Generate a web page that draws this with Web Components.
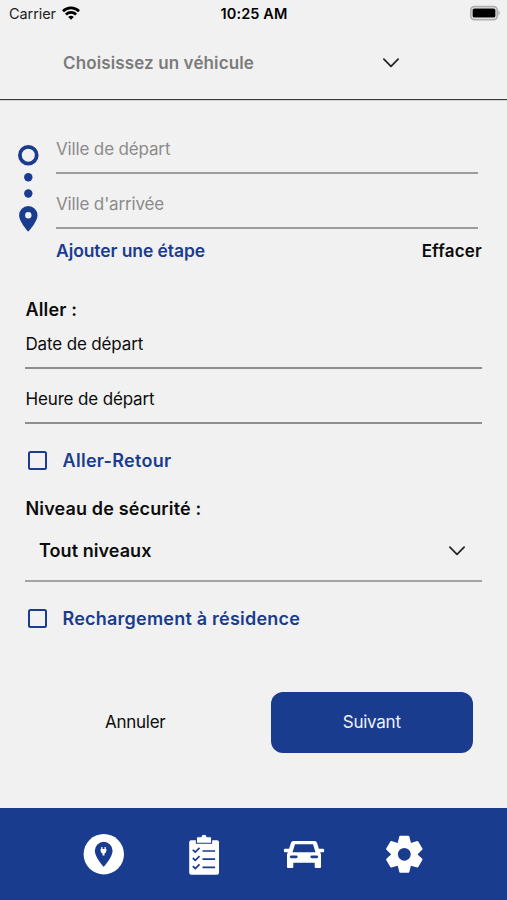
<!DOCTYPE html>
<html lang="fr">
<head>
<meta charset="utf-8">
<title>Itinéraire</title>
<style>
  body {
    margin: 0;
    width: 507px;
    height: 900px;
    overflow: hidden;
    background: #f1f1f1;
    color: #0c0c0c;
    font-family: Inter, 'Liberation Sans', sans-serif;
    font-size: 17px;
    letter-spacing: -0.15px;
    --blue: #193c8f;
    --line: #9c9c9c;
  }
</style>
</head>
<body>
<trip-app></trip-app>

<script>
/**
 * @class StatusBar
 * @description Carrier, clock and battery at the top of the screen.
 */
class StatusBar extends HTMLElement {
  constructor() {
    super();
    this.attachShadow({ mode: 'open' });
    this.shadowRoot.innerHTML = `
      <style>
        :host {
          display: grid;
          grid-template-columns: 1fr auto 1fr;
          align-items: center;
          height: 28px;
          padding: 0 8px 0 9px;
          font-size: 14.5px;
          line-height: 28px;
        }
        .carrier { display: flex; align-items: center; gap: 6px; letter-spacing: -0.08px; color: #222; }
        .carrier svg { margin-top: -2px; }
        .clock { font-weight: 600; letter-spacing: 0.1px; color: #000; }
        .battery { justify-self: end; margin: -2px -2px 0 0; }
        svg { display: block; }
      </style>
      <div class="carrier">
        <span>Carrier</span>
        <svg width="18" height="14" viewBox="0 0 18 14" fill="none" stroke="#000" stroke-width="2.7">
          <path d="M1 5.2a11.4 11.4 0 0 1 16 0"/>
          <path d="M3.9 8.5a7.3 7.3 0 0 1 10.2 0"/>
          <path d="M9 13.8 6.2 11a4 4 0 0 1 5.6 0z" fill="#000" stroke="none"/>
        </svg>
      </div>
      <span class="clock"><slot></slot></span>
      <svg class="battery" width="31" height="16" viewBox="0 0 31 16">
        <rect x=".8" y="1.6" width="26.4" height="13" rx="3.6" fill="#f1f1f1" stroke="#b0b0b0" stroke-width="1.8"/>
        <rect x="2.6" y="3.4" width="22.8" height="9.2" rx="1.6" fill="#000"/>
        <path d="M28.4 5.6c1.9.7 1.9 4.3 0 5z" fill="#b0b0b0"/>
      </svg>
    `;
  }
}
customElements.define('status-bar', StatusBar);

/**
 * @class ChevronIcon
 * @description Thin downward arrow used by both pickers.
 */
class ChevronIcon extends HTMLElement {
  constructor() {
    super();
    this.attachShadow({ mode: 'open' });
    this.shadowRoot.innerHTML = `
      <style>
        :host { display: block; width: 16px; height: 10px; }
        svg { display: block; }
      </style>
      <svg width="16" height="10" viewBox="0 0 16 10" fill="none" stroke="#222" stroke-width="1.7" stroke-linecap="round" stroke-linejoin="round">
        <path d="M.9 1.2 8 8.4l7.1-7.2"/>
      </svg>
    `;
  }
}
customElements.define('chevron-icon', ChevronIcon);

/**
 * @class VehiclePicker
 * @description Header with the vehicle drop-down.
 */
class VehiclePicker extends HTMLElement {
  constructor() {
    super();
    this.attachShadow({ mode: 'open' });
    this.shadowRoot.innerHTML = `
      <style>
        :host {
          display: flex;
          justify-content: space-between;
          align-items: center;
          box-sizing: border-box;
          height: 72px;
          padding: 0 108px 2px 63px;
          border-bottom: 1px solid #3a3a3a;
          box-shadow: 0 1px 0 #d4d4d4;
          color: #7b7b7b;
          font-weight: 600;
          letter-spacing: 0.12px;
        }
      </style>
      <slot></slot>
      <chevron-icon></chevron-icon>
    `;
  }
}
customElements.define('vehicle-picker', VehiclePicker);

/**
 * @class LineField
 * @description One underlined row. Takes a label and, optionally, an icon in the "end" slot.
 */
class LineField extends HTMLElement {
  constructor() {
    super();
    this.attachShadow({ mode: 'open' });
    this.shadowRoot.innerHTML = `
      <style>
        :host {
          display: flex;
          justify-content: space-between;
          align-items: center;
          box-sizing: border-box;
          height: 55px;
          padding-top: 7px;
          border-bottom: 2px solid var(--line);
        }
        :host([placeholder]) { color: #8b8b8b; }
        :host([select]) {
          height: 62px;
          padding: 1px 17px 0 14px;
          font-size: 18px;
          font-weight: 600;
          letter-spacing: 0.06px;
        }
      </style>
      <slot></slot>
      <slot name="end"></slot>
    `;
  }
}
customElements.define('line-field', LineField);

/**
 * @class RouteForm
 * @description Start and end cities with the route marker on the left.
 */
class RouteForm extends HTMLElement {
  constructor() {
    super();
    this.attachShadow({ mode: 'open' });
    this.shadowRoot.innerHTML = `
      <style>
        :host { display: flex; padding: 19px 29px 0 18px; }
        .marker { flex: none; width: 38px; padding-top: 25px; }
        .marker svg { display: block; }
        .fields { flex: 1; }
        .links {
          display: flex;
          justify-content: space-between;
          align-items: baseline;
          height: 33px;
          padding-top: 11px;
          line-height: 22px;
          margin-right: -4px;
          font-weight: 600;
        }
        .add { color: var(--blue); font-size: 17.5px; letter-spacing: -0.09px; }
        .clear { letter-spacing: 0.2px; }
      </style>
      <div class="marker">
        <svg width="21" height="90" viewBox="0 0 21 90" fill="#193c8f">
          <circle cx="10.3" cy="11.2" r="8.4" fill="none" stroke="#193c8f" stroke-width="3.8"/>
          <circle cx="10.3" cy="33.3" r="4.2"/>
          <circle cx="10.3" cy="49.5" r="4.2"/>
          <path fill-rule="evenodd" d="M10.3 62a9.2 9.2 0 0 0-9.2 9.2c0 6.6 9.2 16.4 9.2 16.4s9.2-9.8 9.2-16.4A9.2 9.2 0 0 0 10.3 62zm0 6a3.2 3.2 0 1 1 0 6.4 3.2 3.2 0 0 1 0-6.4z"/>
        </svg>
      </div>
      <div class="fields">
        <line-field placeholder>Ville de départ</line-field>
        <line-field placeholder>Ville d'arrivée</line-field>
        <div class="links">
          <span class="add">Ajouter une étape</span>
          <span class="clear">Effacer</span>
        </div>
      </div>
    `;
  }
}
customElements.define('route-form', RouteForm);

/**
 * @class CheckOption
 * @description Empty checkbox followed by a blue label.
 */
class CheckOption extends HTMLElement {
  constructor() {
    super();
    this.attachShadow({ mode: 'open' });
    this.shadowRoot.innerHTML = `
      <style>
        :host {
          display: flex;
          align-items: center;
          gap: 15.5px;
          height: 73px;
          padding-left: 3px;
          color: var(--blue);
          font-size: 18px;
          font-weight: 600;
          letter-spacing: 0.22px;
        }
        i {
          box-sizing: border-box;
          width: 19px;
          height: 19px;
          border: 2px solid var(--blue);
          border-radius: 2.5px;
        }
      </style>
      <i></i><slot></slot>
    `;
  }
}
customElements.define('check-option', CheckOption);

/**
 * @class TripOptions
 * @description Departure date and time, return trip and safety level.
 */
class TripOptions extends HTMLElement {
  constructor() {
    super();
    this.attachShadow({ mode: 'open' });
    this.shadowRoot.innerHTML = `
      <style>
        :host { display: block; padding: 0 25px; }
        h2 {
          margin: 0;
          padding-left: 0.5px;
          font-size: 18px;
          font-weight: 600;
          line-height: 22px;
          letter-spacing: 0.15px;
        }
        .go { padding-top: 26px; margin-bottom: -7px; }
        .level { padding-top: 1px; }
        line-field { --line: #8f8f8f; }
        line-field:not([select]) { text-indent: 0.5px; }
        line-field[select] { --line: #a3a3a3; }
      </style>
      <h2 class="go">Aller :</h2>
      <line-field>Date de départ</line-field>
      <line-field>Heure de départ</line-field>
      <check-option style="letter-spacing: 0.29px">Aller-Retour</check-option>
      <h2 class="level">Niveau de sécurité :</h2>
      <line-field select>Tout niveaux<chevron-icon slot="end"></chevron-icon></line-field>
      <check-option>Rechargement à résidence</check-option>
    `;
  }
}
customElements.define('trip-options', TripOptions);

/**
 * @class FormActions
 * @description Cancel and next buttons.
 */
class FormActions extends HTMLElement {
  constructor() {
    super();
    this.attachShadow({ mode: 'open' });
    this.shadowRoot.innerHTML = `
      <style>
        :host { display: flex; padding: 36.5px 34px 0 0; letter-spacing: -0.25px; }
        button {
          height: 61px;
          padding: 0;
          border: 0;
          border-radius: 12px;
          background: none;
          color: inherit;
          font: inherit;
          letter-spacing: inherit;
        }
        .cancel { flex: 1; }
        .next { width: 202.5px; background: var(--blue); color: #f1f3fa; }
      </style>
      <button class="cancel">Annuler</button>
      <button class="next">Suivant</button>
    `;
  }
}
customElements.define('form-actions', FormActions);

/**
 * @class TabBar
 * @description Bottom navigation: map, bookings, vehicles, settings.
 */
class TabBar extends HTMLElement {
  constructor() {
    super();
    this.attachShadow({ mode: 'open' });
    // The gear is a disc with the same tooth turned six times
    const teeth = [0, 60, 120, 180, 240, 300]
      .map(a => `<path d="M-6.8-10.5-5-17.8q.2-.7.9-.7h8.2q.7 0 .9.7L6.8-10.5z" transform="rotate(${a})"/>`)
      .join('');
    this.shadowRoot.innerHTML = `
      <style>
        :host {
          display: flex;
          justify-content: space-between;
          box-sizing: border-box;
          height: 92px;
          padding: 25px 82px 0 83px;
          background: var(--blue);
        }
        svg { display: block; }
      </style>
      <svg width="42" height="42" viewBox="0 0 42 42">
        <circle cx="20.8" cy="21.2" r="20.2" fill="#fff"/>
        <path d="M20.7 8.8a8.9 8.9 0 0 0-8.9 8.9c0 6.5 8.9 16.1 8.9 16.1s8.9-9.6 8.9-16.1a8.9 8.9 0 0 0-8.9-8.9z" fill="#193c8f"/>
        <path d="M17.6 16h5.8v2a2.9 2.9 0 0 1-1.9 2.6v2h-2v-2a2.9 2.9 0 0 1-1.9-2.6zM18.2 13.9h1.3v2.6h-1.3zM21.5 13.9h1.3v2.6h-1.3z" fill="#fff"/>
      </svg>
      <svg width="42" height="42" viewBox="0 0 42 42">
        <path d="M8.2 7.3h25.8a2 2 0 0 1 2 2v30.4a2 2 0 0 1-2 2H8.2a2 2 0 0 1-2-2V9.3a2 2 0 0 1 2-2z" fill="#fff"/>
        <path d="M14.4 3.800h3.500c.3-1.6 1.5-2.6 3.1-2.6s2.800 1 3.100 2.600h3.500a1 1 0 0 1 1 1v5.400H13.400V4.800a1 1 0 0 1 1-1z" fill="#fff" stroke="#193c8f" stroke-width="1.1"/>
        <path d="m9.8 16.800 2.500 2.300 4.200-4.200M9.8 25l2.500 2.300 4.200-4.200M9.8 33.200l2.500 2.300 4.200-4.200M19.500 18h12.600M19.500 26.200h12.600M19.500 34.400h12.600" fill="none" stroke="#193c8f" stroke-width="1.7"/>
      </svg>
      <svg width="42" height="42" viewBox="0 0 42 42">
        <path fill="#fff" fill-rule="evenodd" d="M10.4 8h21.2a2.500 2.500 0 0 1 2.400 1.800l1.900 6h4.200a1 1 0 0 1 1 1v1.400a1 1 0 0 1-1 1h-2.900l.8 2.400V34a1 1 0 0 1-1 1h-4.300a1 1 0 0 1-1-1v-4.200H10.300V34a1 1 0 0 1-1 1H5a1 1 0 0 1-1-1V21.600l.8-2.400H1.900a1 1 0 0 1-1-1v-1.400a1 1 0 0 1 1-1h4.200l1.900-6A2.500 2.500 0 0 1 10.400 8zM12 11.200l-2.500 8h23l-2.500-8zM8.300 22.400a1.300 1.300 0 0 0 0 2.900h4.900a1.300 1.300 0 0 0 0-2.900zM28.800 22.400a1.300 1.300 0 0 0 0 2.900h4.900a1.300 1.300 0 0 0 0-2.900z"/>
      </svg>
      <svg width="42" height="42" viewBox="0 0 42 42">
        <g transform="translate(21.3 21.3)" fill="#fff">
          ${teeth}
          <circle r="13"/>
          <circle r="6.4" fill="#193c8f"/>
        </g>
      </svg>
    `;
  }
}
customElements.define('tab-bar', TabBar);

/**
 * @class TripApp
 * @description The whole screen, stacked top to bottom.
 */
class TripApp extends HTMLElement {
  constructor() {
    super();
    this.attachShadow({ mode: 'open' });
    this.shadowRoot.innerHTML = `
      <style>
        :host { display: flex; flex-direction: column; height: 900px; }
        tab-bar { margin-top: auto; }
      </style>
      <status-bar>10:25 AM</status-bar>
      <vehicle-picker>Choisissez un véhicule</vehicle-picker>
      <route-form></route-form>
      <trip-options></trip-options>
      <form-actions></form-actions>
      <tab-bar></tab-bar>
    `;
  }
}
customElements.define('trip-app', TripApp);
</script>
</body>
</html>
